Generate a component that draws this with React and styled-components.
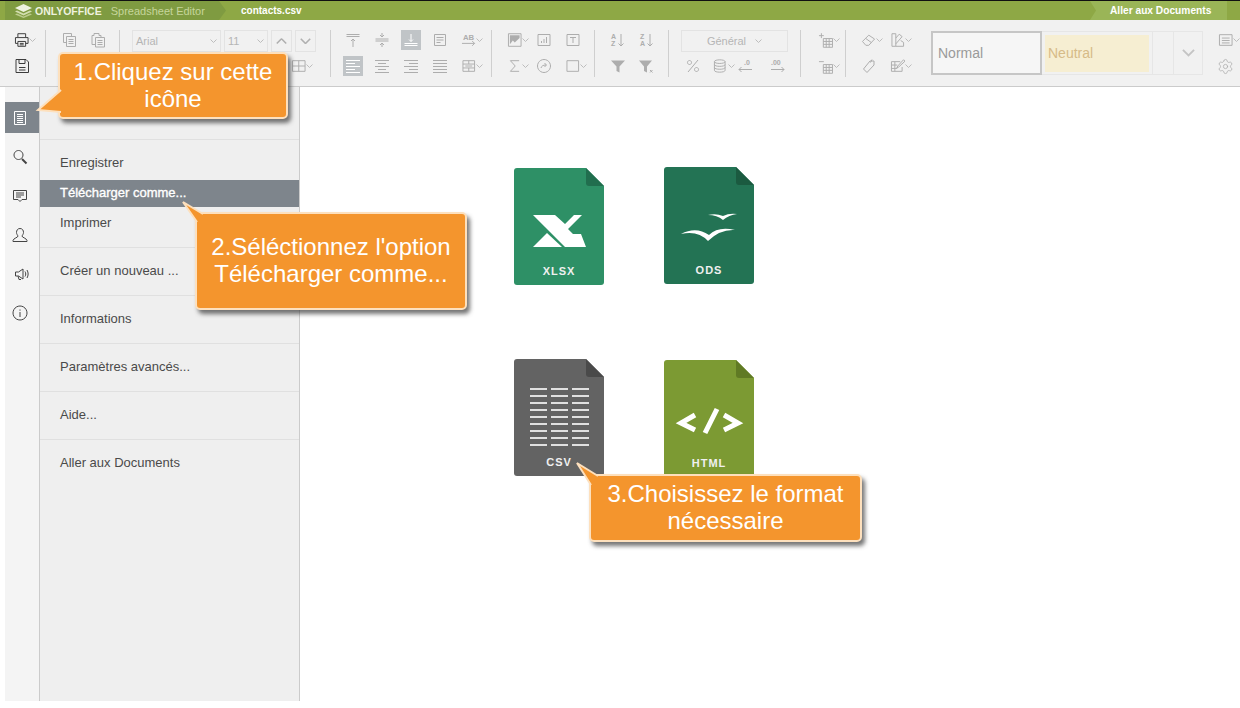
import React from "react";
import styled, { createGlobalStyle } from "styled-components";
import { Settings } from "lucide-react";

const GlobalStyle = createGlobalStyle`
  html, body {
    margin: 0;
    padding: 0;
    background: #fff;
    font-family: "Liberation Sans", Arial, sans-serif;
  }
`;

// paths of the toolbar icons, all on a 16x16 box
const paths = {
  print: "M4 5V1.5h8V5M4 11.5H1.5v-6h13v6H12M4 9.5h8v5H4zM6 11.5h4M6 13h4",
  save: "M2 1.5h10l2.500 2.500v10.500H2zM5 1.500v4h6v-4M5 9.500h6.500M5 12h6.500",
  copy: "M2.500 1.500h8v3M2.500 1.500v9h2.500M5.500 4.500h9v10h-9zM7.500 7.500h5M7.500 9.500h5M7.500 11.500h5",
  paste: "M2 3.500h2v-2h5v2h2v1.500M2 3.500v9h3.500M5.500 5.500h9v9.500h-9zM7.500 8.500h5M7.500 10.500h5M7.500 12.500h5",
  alTop: "M1.500 2.500h13M1.500 4.500h13M8 7v8M6 9l2-2 2 2",
  alMid: "M1.500 7h13M1.500 9h13M8 1v4M6 3l2 2 2-2M8 11v4M6 13l2-2 2 2",
  alBot: "M1.500 11.500h13M1.500 13.500h13M8 2v7.500M6 7.500l2 2 2-2",
  wrap: "M2.500 2.500h11v11h-11zM4.500 5.500h7M4.500 8h7M4.500 10.500h4",
  left: "M1 2.500h14M1 5.500h9M1 8.500h14M1 11.500h9M1 14.500h14",
  center: "M1 2.500h14M4 5.500h8M1 8.500h14M4 11.500h8M1 14.500h14",
  right: "M1 2.500h14M6 5.500h9M1 8.500h14M6 11.500h9M1 14.500h14",
  justify: "M1 2.500h14M1 5.500h14M1 8.500h14M1 11.500h14M1 14.500h14",
  merge: "M2 2.500h12v11H2zM2 6h12M2 10h12M8 2.500V6M8 10v3.500M4.500 8h7",
  image: "M1.500 1.500h13v13h-13z",
  chart: "M2 2.500h12v11H2zM5.500 11v-2M8 11V7M10.500 11V5",
  textBox: "M2 2.500h12v11H2zM5 5.500h6M8 5.500V11",
  sum: "M12.500 2.500H3.500L8.500 8l-5 5.500h9",
  named: "M8 1.500a6.500 6.500 0 1 0 .01 0zM5 10c.5-2 2-3 5-3M8.500 5l2 2-2 2",
  shape: "M2 2.500h12v11H2z",
  filterOff: "M11 12l2.500 2.500M13.500 12 11 14.500",
  percent: "M13 2 3 14M4.500 2.500a2 2 0 1 0 .01 0zM11.500 9.500a2 2 0 1 0 .01 0z",
  db: "M2.500 3.500c0-2.500 11-2.500 11 0v9c0 2.500-11 2.500-11 0zM2.500 3.500c0 2.500 11 2.500 11 0M2.500 6.500c0 2.500 11 2.500 11 0M2.500 9.500c0 2.500 11 2.500 11 0",
  arrowL: "M15 11.500H2M4.500 9l-2.500 2.500L4.500 14",
  arrowR: "M1 11.500h13M11.500 9l2.500 2.500L11.500 14",
  rowAdd: "M1 3.500h5M3.500 1v5M5.500 6.500h9.500v9H5.500zM5.500 9.500h9.500M5.500 12.500h9.500M8.500 6.500v9M11.500 6.500v9",
  rowDel: "M1 3.500h5M5.500 6.500h9.500v9H5.500zM5.500 9.500h9.500M5.500 12.500h9.500M8.500 6.500v9M11.500 6.500v9",
  erase: "M1.500 9.500 8 3l6 4-6 6.500H5zM5 6.500l5.500 4",
  palette: "M2 1.500h4v13H2zM6 6l3.500-4 3 2.500L6 12M6 14.500h8v-4l-3-2",
  tag: "M9 3h4v4l-7 7.500-3.500-3.500zM11 1.500l-1.500 3",
  editTable: "M1.500 3.500h9M1.500 3.500v10h11V9M1.500 7h6M1.500 10.500h6M5 3.500v10M14 1.500 8 8l-1 2 2-1 6.500-6z",
  lines: "M1.500 2.500h13v11h-13zM4 6h8M4 8.500h8M4 11h8",
  table: "M1.500 2.500h13v11h-13zM8 2.500v11M1.500 8h13",
  doc: "M2.500 1.500h11v13h-11zM5 4.500h6M5 6.500h6M5 8.500h6M5 10.500h6M5 12.500h6",
  search: "M6.500 1.500a4.500 4.500 0 1 0 .01 0z",
  comment: "M1.500 2.500h13v9H10L8 13.500l-2-2H1.500zM4 5h8M4 7h8M4 9h5",
  user: "M8 1.500c-2.500 0-3.500 2-3.500 4 0 1.500 1 2.500 1.500 3.500.3 1.500-4.500 2-5 4.500v1h14v-1c-.5-2.500-5.300-3-5-4.500.5-1 1.500-2 1.500-3.500 0-2-1-4-3.500-4z",
  speaker: "M1.500 6h3L9 3v10L4.500 10h-3zM4 10l1 3.500h2M11 5.500c1 1.500 1 3.500 0 5M13 4c1.500 2.500 1.500 5.500 0 8",
  info: "M8 1a7 7 0 1 0 .01 0zM8 7v5M8 4.500v1.200",
};

const Icon = ({ name, children }) => (
  <svg width="16" height="16" viewBox="0 0 16 16" fill="none" stroke="currentColor" strokeWidth="1">
    {name && <path d={paths[name]} />}
    {children}
  </svg>
);

const Chevron = styled.svg.attrs({ viewBox: "0 0 7 4", children: <path d="M.5.5 3.500 3.500 6.500.5" fill="none" stroke="currentColor" /> })`
  width: ${(p) => p.$size || 7}px;
  flex-shrink: 0;
  color: ${(p) => p.$color || "#bdbdbd"};
`;

const MiniText = styled.text`
  font-family: "Liberation Sans", Arial, sans-serif;
  fill: currentColor;
  stroke: none;
  font-size: ${(p) => p.$size}px;
  font-weight: bold;
`;

const Page = styled.div`
  position: relative;
  width: 1240px;
  height: 708px;
  overflow: hidden;
  background: #fff;
`;

const Header = styled.header`
  display: flex;
  align-items: stretch;
  height: 19px;
  padding: 0 13px 0 5px;
  border-top: 1px solid #111;
  background: #8ea845;
  font-size: 11px;
  color: #fff;
`;

const LogoSeg = styled.div`
  display: flex;
  align-items: center;
  width: 221px;
  padding-left: 10px;
  box-sizing: border-box;
  background: #7f9b41;
  clip-path: polygon(0 0, 214px 0, 221px 50%, 214px 100%, 0 100%);
`;

const Brand = styled.span`
  margin-left: 3px;
  font-weight: bold;
  font-size: 10.500px;
  color: #eef2df;
`;

const EditorName = styled.span`
  margin-left: 9px;
  color: #c6d59b;
`;

const FileName = styled.span`
  align-self: center;
  margin-left: 15px;
  font-weight: bold;
  font-size: 10px;
`;

const DocsLink = styled.div`
  display: flex;
  align-items: center;
  margin-left: auto;
  width: 137px;
  padding-left: 20px;
  box-sizing: border-box;
  background: #9ab557;
  font-weight: bold;
  font-size: 10.200px;
  clip-path: polygon(0 0, 100% 0, 100% 100%, 0 100%, 6px 50%);
`;

const Toolbar = styled.div`
  display: flex;
  height: 67px;
  padding-top: 10px;
  box-sizing: border-box;
  border-bottom: 1px solid #cbcbcb;
  background: #f1f1f1;
`;

const Group = styled.div`
  display: flex;
  flex-direction: column;
  gap: 6px;
  flex-shrink: 0;
  box-sizing: border-box;
  width: ${(p) => p.$w}px;
  height: 47px;
  padding-left: ${(p) => p.$pad ?? 8}px;
  border-right: ${(p) => (p.$plain ? "none" : "1px solid #cfcfcf")};
`;

const ToolRow = styled.div`
  display: flex;
  align-items: flex-start;
  height: 20px;
  padding-left: ${(p) => p.$indent || 0}px;
`;

const Tool = styled.div`
  display: flex;
  align-items: center;
  justify-content: ${(p) => (p.$chev ? "flex-start" : "center")};
  flex-shrink: 0;
  box-sizing: border-box;
  width: ${(p) => p.$w || 29}px;
  height: 20px;
  padding-left: ${(p) => (p.$chev ? "6.500px" : 0)};
  color: ${(p) => (p.$active ? "#fff" : p.$dark ? "#3c3c3c" : "#adadad")};
  ${(p) =>
    p.$active &&
    `
    padding: 0 4.5px;
    background: #c0c4c7;
    background-clip: content-box;
  `}
`;

const Combo = styled.div`
  display: flex;
  align-items: center;
  justify-content: ${(p) => (p.$centered ? "center" : "space-between")};
  gap: ${(p) => (p.$centered ? "9px" : 0)};
  flex-shrink: 0;
  box-sizing: border-box;
  width: ${(p) => p.$w}px;
  height: 22px;
  margin-right: ${(p) => p.$mr ?? 3}px;
  padding: 0 ${(p) => (p.$centered ? 0 : 3)}px;
  border: 1px solid #e3e3e3;
  font-size: 11px;
  color: #b5b5b5;
`;

const Gallery = styled.div`
  display: flex;
  flex-shrink: 0;
  height: 44px;
  margin: 1px 0 0 0;
`;

const StyleCell = styled.div`
  box-sizing: border-box;
  width: ${(p) => p.$w}px;
  height: 100%;
  display: flex;
  align-items: center;
  justify-content: center;
  border: 1px solid #e6e6e6;
  border-left-width: ${(p) => (p.$joined ? 0 : 1)}px;
`;

const NormalStyle = styled.div`
  display: flex;
  align-items: center;
  box-sizing: border-box;
  width: 111px;
  height: 100%;
  padding-left: 5px;
  border: 2px solid #c6c6c6;
  background: #f6f6f6;
  font-size: 14px;
  color: #9a9a9a;
`;

const NeutralStyle = styled.div`
  display: flex;
  align-items: center;
  box-sizing: border-box;
  width: 104px;
  height: 37px;
  padding-left: 3px;
  background: #f6eed2;
  font-size: 14px;
  color: #d6bb88;
`;

const Body = styled.div`
  display: flex;
  height: 614px;
`;

const Rail = styled.nav`
  display: flex;
  flex-direction: column;
  gap: 8px;
  box-sizing: border-box;
  width: 35px;
  margin-left: 5px;
  padding-top: 15px;
  border-right: 1px solid #cbcbcb;
  background: #f4f4f4;
`;

const RailBtn = styled.div`
  display: flex;
  align-items: center;
  justify-content: center;
  height: 31px;
  padding-right: ${(p) => (p.$flush ? 0 : 4)}px;
  color: ${(p) => (p.$active ? "#fff" : "#444")};
  background: ${(p) => (p.$active ? "#7e858c" : "transparent")};
`;

const Menu = styled.aside`
  box-sizing: border-box;
  width: 260px;
  border-right: 1px solid #cbcbcb;
  background: #efefef;
`;

const MenuGroup = styled.div`
  display: flex;
  flex-direction: column;
  gap: 3px;
  padding: 10px 0;
  min-height: ${(p) => p.$min || 0}px;
  box-sizing: ${(p) => (p.$min ? "border-box" : "content-box")};
  border-bottom: ${(p) => (p.$last ? "none" : "1px solid #e0e0e0")};
`;

const MenuItem = styled.div`
  display: flex;
  align-items: center;
  height: 27px;
  padding: 0 0 3px 20px;
  box-sizing: border-box;
  font-size: 13px;
  color: ${(p) => (p.$active ? "#fff" : "#4a4a4a")};
  background: ${(p) => (p.$active ? "#7e858c" : "transparent")};
  -webkit-text-stroke: ${(p) => (p.$active ? "0.35px #fff" : "0")};
`;

const Canvas = styled.main`
  display: grid;
  grid-template-columns: 90px 90px;
  grid-template-rows: 118px 118px;
  gap: 74px 60px;
  flex: 1;
  align-content: start;
  padding: 80px 0 0 214px;
`;

const FileCard = styled.div`
  position: relative;
  display: flex;
  align-items: flex-end;
  justify-content: center;
  width: 90px;
  height: 117px;
  margin-top: ${(p) => p.$shift || 0}px;
  padding-bottom: 8px;
  box-sizing: border-box;
`;

const FileArt = styled.svg`
  position: absolute;
  inset: 0;
`;

const FileLabel = styled.span`
  position: relative;
  font-size: 11px;
  font-weight: bold;
  letter-spacing: 1px;
  color: #f0f0f0;
`;

const Callout = styled.div`
  position: absolute;
  left: ${(p) => p.$x}px;
  top: ${(p) => p.$y}px;
  display: flex;
  align-items: center;
  justify-content: center;
  box-sizing: border-box;
  width: ${(p) => p.$w}px;
  height: ${(p) => p.$h}px;
  padding-bottom: 2px;
  border: 2px solid #fde0bd;
  border-radius: 5px;
  background: #f4952d;
  box-shadow: 3px 4px 4px rgba(60, 60, 60, 0.7);
  color: #fff;
  font-size: 24px;
  line-height: 27px;
  text-align: center;
`;

const Tail = styled.svg`
  position: absolute;
  left: -2px;
  top: -2px;
  width: 1px;
  height: 1px;
  overflow: visible;
`;

const CalloutTail = ({ points }) => {
  const [a, tip, b] = points;
  return (
    <Tail>
      <polygon points={`${a} ${tip} ${b}`} fill="#f4952d" />
      <polyline points={`${a} ${tip} ${b}`} fill="none" stroke="#fde0bd" strokeWidth="2" />
    </Tail>
  );
};

const FileShape = ({ color, fold, children }) => (
  <FileArt width="90" height="117" viewBox="0 0 90 117">
    <path d="M3 0H72L90 18V114a3 3 0 0 1-3 3H3a3 3 0 0 1-3-3V3a3 3 0 0 1 3-3Z" fill={color} />
    <path d="M72 0V15a3 3 0 0 0 3 3H90Z" fill={fold} />
    {children}
  </FileArt>
);

const csvRows = [30, 37, 44, 51, 58, 65, 72, 79, 86];
const csvCols = [16, 37, 58];

const Tb = ({ name, chev, active, dark, w, children }) => (
  <Tool $chev={chev} $active={active} $dark={dark} $w={w}>
    <Icon name={name}>{children}</Icon>
    {chev && <Chevron />}
  </Tool>
);

const menuGroups = [
  ["Enregistrer", "Télécharger comme...", "Imprimer"],
  ["Créer un nouveau ..."],
  ["Informations"],
  ["Paramètres avancés..."],
  ["Aide..."],
  ["Aller aux Documents"],
];

export default function App() {
  return (
    <Page>
      <GlobalStyle />
      <Header>
        <LogoSeg>
          <svg width="17" height="14" viewBox="0 0 17 14">
            <path d="M8.500 0 17 4 8.500 8 0 4Z" fill="#eef2df" />
            <path d="M2 6.500 8.500 9.500 15 6.500 17 7.500 8.500 11.500 0 7.500Z" fill="#d3deb0" />
            <path d="M2 9.500 8.500 12.500 15 9.500 17 10.500 8.500 14 0 10.500Z" fill="#bccb8c" />
          </svg>
          <Brand>ONLYOFFICE</Brand>
          <EditorName>Spreadsheet Editor</EditorName>
        </LogoSeg>
        <FileName>contacts.csv</FileName>
        <DocsLink>Aller aux Documents</DocsLink>
      </Header>

      <Toolbar>
        <Group $w={46} $pad={7}>
          <ToolRow><Tb name="print" chev dark /></ToolRow>
          <ToolRow><Tb name="save" dark /></ToolRow>
        </Group>
        <Group $w={74}>
          <ToolRow>
            <Tb name="copy" />
            <Tb name="paste" />
          </ToolRow>
          <ToolRow />
        </Group>
        <Group $w={211} $pad={12}>
          <ToolRow>
            <Combo $w={89}>Arial<Chevron /></Combo>
            <Combo $w={44}>11<Chevron /></Combo>
            <Combo $w={21} $centered><Chevron $size={11} $color="#b0b0b0" style={{ transform: "scaleY(-1)" }} /></Combo>
            <Combo $w={21} $centered $mr={0}><Chevron $size={11} $color="#b0b0b0" /></Combo>
          </ToolRow>
          <ToolRow $indent={152}><Tb name="table" chev /></ToolRow>
        </Group>
        <Group $w={161} $pad={7}>
          <ToolRow>
            <Tb name="alTop" />
            <Tb name="alMid" />
            <Tb name="alBot" active />
            <Tb name="wrap" />
            <Tb chev name="arrowR">
              <MiniText x="2" y="8" $size={8}>AB</MiniText>
            </Tb>
          </ToolRow>
          <ToolRow>
            <Tb name="left" active />
            <Tb name="center" />
            <Tb name="right" />
            <Tb name="justify" />
            <Tb name="merge" chev />
          </ToolRow>
        </Group>
        <Group $w={103}>
          <ToolRow>
            <Tb name="image" chev>
              <path d="M3 3h10v3L8 10.500 6 8.500l-3 4z" fill="currentColor" stroke="none" />
            </Tb>
            <Tb name="chart" />
            <Tb name="textBox" />
          </ToolRow>
          <ToolRow>
            <Tb name="sum" chev />
            <Tb name="named" />
            <Tb name="shape" chev />
          </ToolRow>
        </Group>
        <Group $w={74}>
          <ToolRow>
            <Tb>
              <MiniText x="1" y="7" $size={7}>A</MiniText>
              <MiniText x="1" y="14" $size={7}>Z</MiniText>
              <path d="M11 2v12M8.500 11.500 11 14l2.500-2.500" />
            </Tb>
            <Tb>
              <MiniText x="1" y="7" $size={7}>Z</MiniText>
              <MiniText x="1" y="14" $size={7}>A</MiniText>
              <path d="M11 2v12M8.500 11.500 11 14l2.500-2.500" />
            </Tb>
          </ToolRow>
          <ToolRow>
            <Tb><path d="M1 2.500h14L9.500 8.500V14.500l-3-1.500V8.500z" fill="currentColor" stroke="none" /></Tb>
            <Tb name="filterOff"><path d="M0 2.500h13L8 8.500V14.500l-3-1.500V8.500z" fill="currentColor" stroke="none" /></Tb>
          </ToolRow>
        </Group>
        <Group $w={132} $pad={12}>
          <ToolRow>
            <Combo $w={107} $centered $mr={0}>Général<Chevron /></Combo>
          </ToolRow>
          <ToolRow>
            <Tb name="percent" w={24.5} />
            <Tb name="db" chev />
            <Tb name="arrowL" w={21}>
              <MiniText x="7" y="7" $size={7}>.0</MiniText>
            </Tb>
            <Tb name="arrowR" w={45}>
              <MiniText x="1" y="7" $size={7}>.00</MiniText>
            </Tb>
          </ToolRow>
        </Group>
        <Group $w={45} $pad={10}>
          <ToolRow><Tb name="rowAdd" chev /></ToolRow>
          <ToolRow><Tb name="rowDel" chev /></ToolRow>
        </Group>
        <Group $w={85} $plain>
          <ToolRow>
            <Tb name="erase" chev />
            <Tb name="palette" chev />
          </ToolRow>
          <ToolRow>
            <Tb name="tag" />
            <Tb name="editTable" chev />
          </ToolRow>
        </Group>
        <Gallery>
          <NormalStyle>Normal</NormalStyle>
          <StyleCell $w={111} $joined><NeutralStyle>Neutral</NeutralStyle></StyleCell>
          <StyleCell $w={21} $joined />
          <StyleCell $w={29} $joined><Chevron $size={13} $color="#c4c4c4" /></StyleCell>
        </Gallery>
        <Group $w={37} $plain>
          <ToolRow><Tb name="lines" chev /></ToolRow>
          <ToolRow>
            <Tool><Settings size={17} strokeWidth={1.1} /></Tool>
          </ToolRow>
        </Group>
      </Toolbar>

      <Body>
        <Rail>
          <RailBtn $active><Icon name="doc" /></RailBtn>
          <RailBtn>
            <Icon name="search"><path d="M10 10l4.500 4.500" strokeWidth="2" /></Icon>
          </RailBtn>
          <RailBtn><Icon name="comment" /></RailBtn>
          <RailBtn><Icon name="user" /></RailBtn>
          <RailBtn $flush><Icon name="speaker" /></RailBtn>
          <RailBtn><Icon name="info" /></RailBtn>
        </Rail>

        <Menu>
          <MenuGroup $min={53} />
          {menuGroups.map((items, i) => (
            <MenuGroup key={items[0]} $last={i === menuGroups.length - 1}>
              {items.map((label) => (
                <MenuItem key={label} $active={label.startsWith("Télécharger")}>{label}</MenuItem>
              ))}
            </MenuGroup>
          ))}
        </Menu>

        <Canvas>
          <FileCard $shift={1}>
            <FileShape color="#2e9066" fold="#216e4e">
              <polygon points="19,47 41,47 51,56 60,47 68,47 54,61 59,66 67,66 72,79 51,79 31,59" fill="#fff" />
              <polygon points="19,79 33,65 48,79" fill="#fff" />
            </FileShape>
            <FileLabel>XLSX</FileLabel>
          </FileCard>
          <FileCard>
            <FileShape color="#237354" fold="#1b5a40">
              <path d="M17 67Q32 59 45 68 54 59 71 63 56 62 44 74 34 63 17 67Z" fill="#fff" />
              <path d="M44 48Q52 46 59 49 65 46 73 47 65 48 59 53 53 48 44 48Z" fill="#fff" />
            </FileShape>
            <FileLabel>ODS</FileLabel>
          </FileCard>
          <FileCard>
            <FileShape color="#636363" fold="#4a4a4a">
              {csvRows.map((y) =>
                csvCols.map((x) => (
                  <line key={`${x}-${y}`} x1={x} x2={x + 17} y1={y} y2={y} stroke="#fff" strokeWidth="1.600" />
                ))
              )}
            </FileShape>
            <FileLabel>CSV</FileLabel>
          </FileCard>
          <FileCard $shift={1}>
            <FileShape color="#7c9a33" fold="#607a24">
              <g fill="none" stroke="#fff" strokeWidth="5">
                <path d="M31 55 17 63l14 7" />
                <path d="M53 49 41 73" />
                <path d="M60 55l14 8-14 7" />
              </g>
            </FileShape>
            <FileLabel>HTML</FileLabel>
          </FileCard>
        </Canvas>
      </Body>

      <Callout $x={58} $y={52} $w={230} $h={67}>
        <CalloutTail points={["3,38", "-20,58", "3,60"]} />
        1.Cliquez sur cette<br />icône
      </Callout>
      <Callout $x={195} $y={212} $w={272} $h={98}>
        <CalloutTail points={["8,2", "-12,-10", "2,10"]} />
        2.Séléctionnez l'option<br />Télécharger comme...
      </Callout>
      <Callout $x={589} $y={474} $w={273} $h={68}>
        <CalloutTail points={["9,2", "-12,-11", "2,11"]} />
        3.Choisissez le format<br />nécessaire
      </Callout>
    </Page>
  );
}
